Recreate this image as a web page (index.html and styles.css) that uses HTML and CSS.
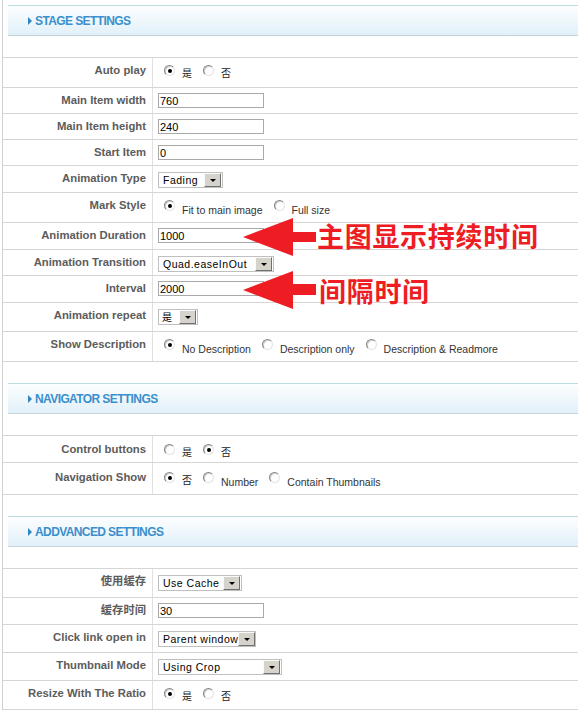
FILE: index.html
```html
<!DOCTYPE html>
<html>
<head>
<meta charset="utf-8">
<link rel="stylesheet" href="styles.css">
</head>
<body>
<div class="panel">
  <section class="group">
    <h2 class="group-head"><span class="caret"></span>STAGE SETTINGS</h2>
    <div class="table">
      <div class="row h29">
        <div class="key">Auto play</div>
        <div class="val"><div class="radios">
          <label class="opt"><span class="radio on"></span><span class="cjk">是</span></label>
          <label class="opt"><span class="radio"></span><span class="cjk">否</span></label>
        </div></div>
      </div>
      <div class="row">
        <div class="key">Main Item width</div>
        <div class="val"><input class="text" type="text" value="760"></div>
      </div>
      <div class="row">
        <div class="key">Main Item height</div>
        <div class="val"><input class="text" type="text" value="240"></div>
      </div>
      <div class="row">
        <div class="key">Start Item</div>
        <div class="val"><input class="text" type="text" value="0"></div>
      </div>
      <div class="row h26">
        <div class="key">Animation Type</div>
        <div class="val"><span class="select w65"><span class="sel-text">Fading</span><span class="sel-btn"></span></span></div>
      </div>
      <div class="row h29">
        <div class="key">Mark Style</div>
        <div class="val"><div class="radios">
          <label class="opt"><span class="radio on"></span><span class="opt-text">Fit to main image</span></label>
          <label class="opt"><span class="radio"></span><span class="opt-text">Full size</span></label>
        </div></div>
      </div>
      <div class="row h26">
        <div class="key">Animation Duration</div>
        <div class="val"><input class="text" type="text" value="1000"></div>
      </div>
      <div class="row">
        <div class="key">Animation Transition</div>
        <div class="val"><span class="select w116"><span class="sel-text">Quad.easeInOut</span><span class="sel-btn"></span></span></div>
      </div>
      <div class="row h26">
        <div class="key">Interval</div>
        <div class="val"><input class="text" type="text" value="2000"></div>
      </div>
      <div class="row h28">
        <div class="key">Animation repeat</div>
        <div class="val"><span class="select w40"><span class="sel-text cjk-sel">是</span><span class="sel-btn"></span></span></div>
      </div>
      <div class="row h29">
        <div class="key">Show Description</div>
        <div class="val"><div class="radios">
          <label class="opt"><span class="radio on"></span><span class="opt-text">No Description</span></label>
          <label class="opt"><span class="radio"></span><span class="opt-text">Description only</span></label>
          <label class="opt"><span class="radio"></span><span class="opt-text">Description &amp; Readmore</span></label>
        </div></div>
      </div>
    </div>
  </section>

  <section class="group">
    <h2 class="group-head"><span class="caret"></span>NAVIGATOR SETTINGS</h2>
    <div class="table">
      <div class="row h26 low">
        <div class="key">Control buttons</div>
        <div class="val"><div class="radios">
          <label class="opt"><span class="radio"></span><span class="cjk">是</span></label>
          <label class="opt"><span class="radio on"></span><span class="cjk">否</span></label>
        </div></div>
      </div>
      <div class="row h31 lower">
        <div class="key">Navigation Show</div>
        <div class="val"><div class="radios">
          <label class="opt"><span class="radio on"></span><span class="cjk">否</span></label>
          <label class="opt"><span class="radio"></span><span class="opt-text">Number</span></label>
          <label class="opt"><span class="radio"></span><span class="opt-text">Contain Thumbnails</span></label>
        </div></div>
      </div>
    </div>
  </section>

  <section class="group">
    <h2 class="group-head"><span class="caret"></span>ADDVANCED SETTINGS</h2>
    <div class="table">
      <div class="row h28">
        <div class="key">使用缓存</div>
        <div class="val"><span class="select w84"><span class="sel-text">Use Cache</span><span class="sel-btn"></span></span></div>
      </div>
      <div class="row h26">
        <div class="key">缓存时间</div>
        <div class="val"><input class="text" type="text" value="30"></div>
      </div>
      <div class="row h27">
        <div class="key">Click link open in</div>
        <div class="val"><span class="select w98"><span class="sel-text">Parent window</span><span class="sel-btn"></span></span></div>
      </div>
      <div class="row h27">
        <div class="key">Thumbnail Mode</div>
        <div class="val"><span class="select w124"><span class="sel-text">Using Crop</span><span class="sel-btn"></span></span></div>
      </div>
      <div class="row h28">
        <div class="key">Resize With The Ratio</div>
        <div class="val"><div class="radios">
          <label class="opt"><span class="radio on"></span><span class="cjk">是</span></label>
          <label class="opt"><span class="radio"></span><span class="cjk">否</span></label>
        </div></div>
      </div>
    </div>
  </section>
</div>

<div class="annot">
  <svg class="arrows" width="578" height="710" viewBox="0 0 578 710">
    <polygon points="243,237 293,218 293,232 316,232 316,242 293,242 293,256"/>
    <polygon points="243,290 293,271 293,284 316,284 316,295 293,295 293,309"/>
  </svg>
  <div class="note note-1">主图显示持续时间</div>
  <div class="note note-2">间隔时间</div>
</div>
</body>
</html>
```
FILE: styles.css
```css
html, body {
  margin: 0;
  padding: 0;
  background: #fff;
}
body {
  width: 578px;
  height: 710px;
  overflow: hidden;
  position: relative;
  font-family: "Liberation Sans", "Noto Sans CJK SC", sans-serif;
}
.panel {
  margin-left: 2px;
  border-left: 1px solid #d0d0d0;
  min-height: 710px;
  padding-top: 5px;
  box-sizing: border-box;
}
.group + .group {
  margin-top: 21px;
}
.group-head {
  margin: 0 0 21px 5px;
  height: 29px;
  border-top: 1px solid #b9dde0;
  border-bottom: 1px solid #c4d2da;
  background: linear-gradient(#fdfeff, #e1f0f9);
  display: flex;
  align-items: center;
  padding-left: 20px;
  font-size: 12px;
  font-weight: 700;
  letter-spacing: -0.6px;
  color: #3a8fcc;
}
.caret {
  width: 0;
  height: 0;
  border-left: 4px solid #2f86c0;
  border-top: 4px solid transparent;
  border-bottom: 4px solid transparent;
  margin-right: 3px;
}
.table {
  border-top: 1px solid #d6d6d6;
}
.row {
  display: flex;
  height: 25px;
  border-bottom: 1px solid #d6d6d6;
}
.h26 { height: 26px; }
.h27 { height: 27px; }
.h28 { height: 28px; }
.h29 { height: 29px; }
.h31 { height: 31px; }
.key {
  width: 150px;
  flex: none;
  box-sizing: border-box;
  border-right: 1px solid #e0e0e0;
  padding: 5px 6px 0 0;
  text-align: right;
  font-size: 11.3px;
  font-weight: 700;
  color: #5c5c5c;
  line-height: 14px;
  white-space: nowrap;
}
.val {
  flex: 1;
  padding: 5px 0 0 5px;
  display: flex;
  align-items: flex-start;
}
.low .key, .low .val { padding-top: 6px; }
.lower .key, .lower .val { padding-top: 7px; }
input.text {
  width: 106px;
  height: 15px;
  box-sizing: border-box;
  border: 1px solid #a9a9a9;
  padding: 0 1px;
  margin: 0;
  font: 11px "Liberation Sans", sans-serif;
  color: #000;
  background: #fff;
  outline: none;
}
.select {
  display: inline-flex;
  height: 16px;
  box-sizing: border-box;
  border: 1px solid #c0c0c0;
  margin-top: 1px;
  background: #fff;
  padding-right: 1px;
}
.w40 { width: 40px; }
.w65 { width: 65px; }
.w84 { width: 84px; }
.w98 { width: 98px; }
.w116 { width: 116px; }
.w124 { width: 124px; }
.sel-text {
  flex: 1;
  font-size: 10.5px;
  letter-spacing: 0.5px;
  line-height: 14px;
  padding-left: 4px;
  color: #000;
  white-space: nowrap;
}
.cjk-sel {
  font-family: "Noto Sans CJK SC", sans-serif;
  font-size: 10px;
  padding-left: 3px;
}
.sel-btn {
  width: 17px;
  flex: none;
  box-sizing: border-box;
  background: #d6d3cd;
  border: 1px solid;
  border-color: #fafafa #707070 #707070 #fafafa;
  display: flex;
  align-items: center;
  justify-content: center;
}
.sel-btn::after {
  content: "";
  border-left: 3px solid transparent;
  border-right: 3px solid transparent;
  border-top: 3px solid #000;
}
.radios {
  display: flex;
  align-items: flex-start;
  margin-left: 6px;
}
.opt {
  display: flex;
  align-items: flex-start;
}
.opt + .opt {
  margin-left: 11px;
}
.radio {
  width: 11px;
  height: 11px;
  box-sizing: border-box;
  margin: 2px 7px 0 0;
  border-radius: 50%;
  border: 1px solid;
  border-color: #858585 #e4e4e4 #e4e4e4 #858585;
  background: #fff;
  box-shadow: inset 1px 1px 0 #cfcfcf;
  display: flex;
  align-items: center;
  justify-content: center;
}
.radio.on::after {
  content: "";
  width: 4px;
  height: 4px;
  border-radius: 50%;
  background: #000;
}
.opt-text {
  font-size: 10.5px;
  line-height: 12px;
  padding-top: 6px;
  color: #333;
  white-space: nowrap;
}
.cjk {
  font-family: "Noto Sans CJK SC", sans-serif;
  font-size: 10px;
  line-height: 12px;
  padding-top: 4px;
  color: #222;
}
.annot {
  position: absolute;
  left: 0;
  top: 0;
  width: 578px;
  height: 710px;
  pointer-events: none;
}
.arrows {
  position: absolute;
  left: 0;
  top: 0;
}
.arrows polygon {
  fill: #ee1d23;
}
.note {
  position: absolute;
  font-family: "Noto Sans CJK SC", sans-serif;
  font-size: 27px;
  font-weight: 700;
  line-height: 1;
  letter-spacing: 0.7px;
  color: #ee1d23;
  white-space: nowrap;
}
.note-1 { left: 317px; top: 222px; }
.note-2 { left: 319px; top: 277px; }
```
